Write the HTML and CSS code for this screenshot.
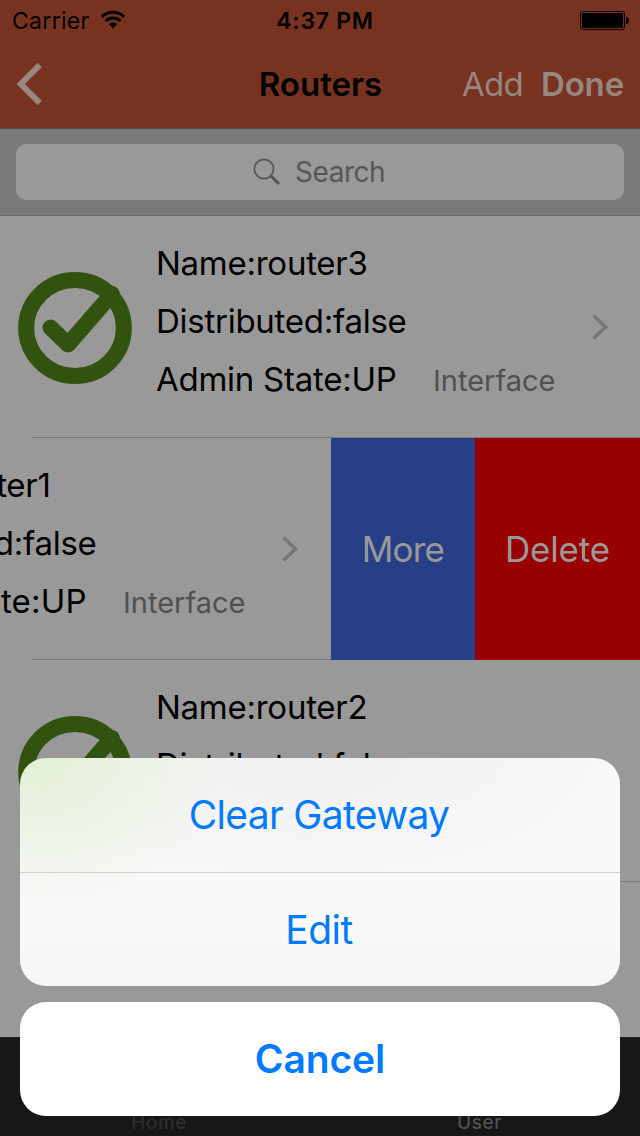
FILE: index.html
```html
<!DOCTYPE html>
<html lang="en">
<head>
<meta charset="utf-8">
<title>Routers</title>
<link rel="stylesheet" href="styles.css">
</head>
<body>
<svg class="defs" width="0" height="0">
  <symbol id="check" viewBox="0 0 114 112">
    <ellipse cx="57" cy="56" rx="48.800" ry="48" fill="none" stroke="#325310" stroke-width="16"/>
    <path d="M32.500 55.500 50 72.500 94 22" fill="none" stroke="#325310" stroke-width="16" stroke-linecap="round" stroke-linejoin="round"/>
  </symbol>
  <symbol id="chevron" viewBox="0 0 16 26">
    <path d="M1.500 1.500 13.500 13 1.500 24.500" fill="none" stroke="#77777a" stroke-width="3.500"/>
  </symbol>
</svg>
<div class="screen">
  <header class="header">
    <div class="status">
      <div class="status-left"><span class="carrier">Carrier</span>
        <svg class="wifi" width="26" height="20" viewBox="0 0 26 20"><path d="M1.800 6.900C8 .7 18 .7 24.200 6.900" fill="none" stroke="#000" stroke-width="3"/><path d="M5.600 11C9.700 7 16.300 7 20.400 11" fill="none" stroke="#000" stroke-width="2.800"/><path d="M8.700 14.100C11 11.900 15 11.900 17.300 14.100L13 18.600Z"/></svg>
      </div>
      <span class="time">4:37 PM</span>
      <svg class="battery" width="49" height="19" viewBox="0 0 49 19"><rect x=".5" y=".5" width="44" height="18" rx="2.500" fill="none" stroke="#000"/><rect x="2" y="2" width="41" height="15" rx="1.500"/><path d="M46 6h1q2 1 2 3.500T47 13h-1z"/></svg>
    </div>
    <nav class="nav">
      <svg class="back" width="26" height="42" viewBox="0 0 26 42"><path d="M23.800 2 4.800 21 23.800 40" fill="none" stroke="#988681" stroke-width="6"/></svg>
      <h1 class="title">Routers</h1>
      <div class="nav-actions"><span class="add">Add</span><span class="done">Done</span></div>
    </nav>
  </header>
  <div class="search-bar">
    <div class="search-field">
      <svg width="28" height="28" viewBox="0 0 28 28" fill="none" stroke="#565658"><circle cx="11" cy="11" r="9.600" stroke-width="1.700"/><path d="M17.500 17.500 26 26" stroke-width="3"/></svg>
      <span class="placeholder">Search</span>
    </div>
  </div>
  <main class="list">
    <section class="row">
      <div class="cell">
        <svg class="check"><use href="#check"/></svg>
        <div class="lines"><p class="name">Name:router3</p><p class="dist">Distributed:false</p><div class="state"><p class="admin">Admin State:UP</p><span class="iface">Interface</span></div></div>
        <svg class="chevron"><use href="#chevron"/></svg>
      </div>
    </section>
    <section class="row swiped">
      <div class="cell">
        <svg class="check"><use href="#check"/></svg>
        <div class="lines"><p class="name">Name:router1</p><p class="dist">Distributed:false</p><div class="state"><p class="admin">Admin State:UP</p><span class="iface">Interface</span></div></div>
        <svg class="chevron"><use href="#chevron"/></svg>
      </div>
      <div class="more"><span>More</span></div>
      <div class="delete"><span>Delete</span></div>
    </section>
    <section class="row">
      <div class="cell">
        <svg class="check"><use href="#check"/></svg>
        <div class="lines"><p class="name">Name:router2</p><p class="dist">Distributed:false</p></div>
      </div>
    </section>
  </main>
  <footer class="tabs"><span class="home">Home</span><span class="user">User</span></footer>
  <div class="sheet">
    <div class="options">
      <div class="option clear"><span>Clear Gateway</span></div>
      <div class="option edit"><span>Edit</span></div>
    </div>
    <div class="cancel"><span>Cancel</span></div>
  </div>
</div>
</body>
</html>
```
FILE: styles.css
```css
* { box-sizing: border-box; }
body { margin: 0; }
h1, p { margin: 0; font-weight: 400; }
.defs { display: block; position: absolute; }
.screen {
  position: relative;
  display: flex;
  flex-direction: column;
  width: 640px;
  height: 1136px;
  overflow: hidden;
  background: #999;
  color: #000;
  font-family: Inter, "Liberation Sans", sans-serif;
  white-space: nowrap;
}
.header { height: 129px; background: #77331f; border-bottom: 1px solid #4d4d4d; }
.status {
  display: grid;
  grid-template-columns: 1fr auto 1fr;
  align-items: center;
  height: 40px;
  padding: 0 11px 0 12px;
  font-size: 23px;
}
.status-left { display: flex; align-items: center; gap: 10px; }
.carrier { width: 78px; padding-top: 2px; letter-spacing: .3px; }
.time { font-weight: 600; letter-spacing: .7px; padding: 2px 0 0 9px; }
.battery { justify-self: end; }
.nav {
  display: grid;
  grid-template-columns: 1fr auto 1fr;
  align-items: center;
  height: 88px;
  padding: 0 16px;
  font-size: 33px;
}
.title { padding-left: 1px; font-size: 33px; font-weight: 600; }
.nav-actions { display: flex; justify-content: flex-end; gap: 18px; color: #988681; }
.add { letter-spacing: -.7px; }
.done { font-weight: 600; letter-spacing: -.15px; }
.search-bar { height: 87px; padding: 15px 16px; background: #79797b; border-bottom: 1px solid #6b6b6c; }
.search-field {
  display: flex;
  align-items: center;
  height: 56px;
  padding-left: 237px;
  gap: 14px;
  border-radius: 10px;
  background: #999;
  color: #565658;
  font-size: 28px;
}
.placeholder { letter-spacing: -.45px; }
.list { height: 821px; }
.row { position: relative; display: flex; height: 222px; overflow: hidden; }
.row::after {
  content: "";
  position: absolute;
  left: 32px;
  right: 0;
  bottom: 0;
  height: 1px;
  background: #7a7a7c;
}
.cell { display: flex; flex: none; align-items: center; width: 640px; padding: 0 32px 0 18px; }
.check { width: 114px; height: 112px; margin-top: 1px; }
.lines {
  align-self: flex-start;
  flex: 1;
  margin: 18px 0 0 24px;
  font-size: 33px;
  line-height: 58px;
  letter-spacing: -.26px;
}
.state { display: flex; align-items: flex-start; }
.admin { width: 277px; }
.iface { padding-top: 2px; color: #505052; font-size: 29px; letter-spacing: 0; }
.chevron { width: 16px; height: 26px; }
.swiped .cell { width: 641px; margin-left: -310px; padding-right: 33px; }
.swiped .admin { width: 283px; margin-left: -6px; letter-spacing: .18px; }
.more, .delete {
  display: flex;
  z-index: 1;
  flex: none;
  align-items: center;
  justify-content: center;
  color: #999;
  font-size: 35px;
}
.more { width: 144px; background: #273f87; letter-spacing: -.8px; }
.delete { width: 165px; background: #900; letter-spacing: -.2px; }
.tabs {
  display: grid;
  grid-template-columns: 1fr 1fr;
  align-items: end;
  height: 99px;
  border-top: 1px solid #222;
  background: #171717;
  color: #303030;
  font-size: 19px;
  line-height: 26px;
  letter-spacing: .6px;
  text-align: center;
}
.home { padding-right: 2px; }
.user { padding-right: 1px; color: #575757; }
.sheet { position: absolute; left: 20px; top: 758px; width: 600px; color: #007aff; font-size: 39px; }
.options {
  height: 228px;
  border-radius: 26px;
  overflow: hidden;
  background:
    radial-gradient(ellipse 190px 150px at 20px 0, #e3efd5 0%, rgba(231,242,222,.72) 45%, rgba(245,247,244,0) 100%),
    radial-gradient(ellipse 300px 130px at 285px 0, #f0f0f0 0%, rgba(247,247,247,0) 100%),
    linear-gradient(#f8f8f8 0%, #f9f9f9 70%, #f6f6f6 100%);
}
.option { display: flex; align-items: center; justify-content: center; height: 114px; padding-right: 2px; }
.option span { padding-bottom: 1px; }
.clear { letter-spacing: -.65px; }
.edit { border-top: 1px solid #d0d3d6; letter-spacing: -.5px; }
.cancel {
  display: flex;
  align-items: center;
  justify-content: center;
  height: 114px;
  margin-top: 16px;
  padding-bottom: 2px;
  border-radius: 26px;
  background: #fff;
  font-weight: 600;
  letter-spacing: -.1px;
}
```
